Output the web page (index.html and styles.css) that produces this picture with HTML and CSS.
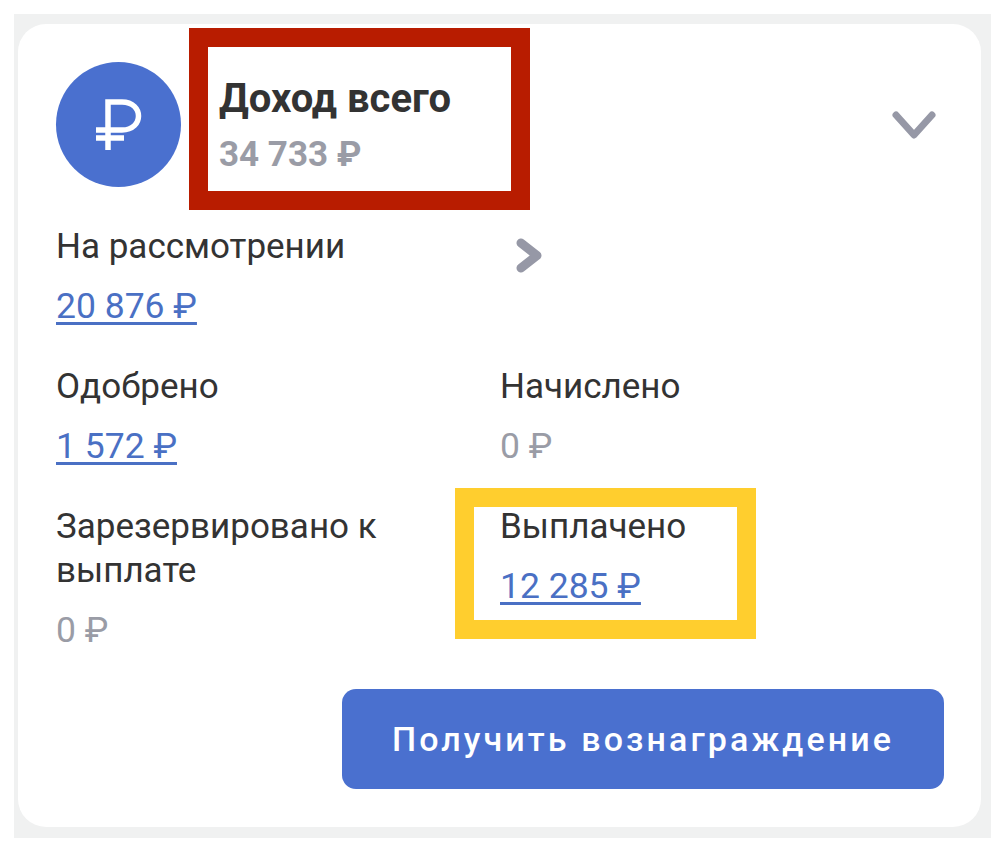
FILE: index.html
```html
<!DOCTYPE html>
<html lang="ru">
<head>
    <meta charset="UTF-8">
    <meta name="viewport" content="width=device-width, initial-scale=1.0">
    <title>Доход</title>
    <link rel="stylesheet" href="styles.css">
</head>
<body>
    <div class="frame">
        <section class="card">
            <header class="card-head">
                <div class="coin">
                    <svg width="125" height="125" viewBox="0 0 125 125" fill="none" stroke="#fff" stroke-width="5.5">
                        <path d="M52 88V40H66C88 40 88 68 66 68H40"/>
                        <path d="M40 76H68"/>
                    </svg>
                </div>
                <div class="total">
                    <h1 class="total-title">Доход всего</h1>
                    <p class="total-sum">34 733 ₽</p>
                </div>
                <svg class="toggle" width="44" height="28" viewBox="0 0 44 28" fill="none" stroke="#9698a6" stroke-width="7" stroke-linecap="round" stroke-linejoin="round">
                    <path d="M4 4L22 24L40 4"/>
                </svg>
            </header>

            <div class="stats">
                <div class="stat">
                    <div class="stat-label">На рассмотрении</div>
                    <a class="stat-value link" href="#">20 876 ₽</a>
                </div>
                <div class="stat">
                    <svg class="stat-arrow" width="26" height="35" viewBox="0 0 26 35" fill="none" stroke="#9698a6" stroke-width="9" stroke-linecap="round" stroke-linejoin="round">
                        <path d="M5 5L21 17.5L5 30"/>
                    </svg>
                </div>
                <div class="stat">
                    <div class="stat-label">Одобрено</div>
                    <a class="stat-value link" href="#">1 572 ₽</a>
                </div>
                <div class="stat">
                    <div class="stat-label">Начислено</div>
                    <div class="stat-value muted">0 ₽</div>
                </div>
                <div class="stat">
                    <div class="stat-label">Зарезервировано к выплате</div>
                    <div class="stat-value muted">0 ₽</div>
                </div>
                <div class="stat">
                    <div class="stat-label">Выплачено</div>
                    <a class="stat-value link" href="#">12 285 ₽</a>
                </div>
            </div>

            <div class="actions">
                <button class="btn-reward" type="button">Получить вознаграждение</button>
            </div>

            <!-- рамки поверх скриншота -->
            <div class="mark mark-red"></div>
            <div class="mark mark-yellow"></div>
        </section>
    </div>
</body>
</html>
```

FILE: styles.css
```css
html, body {
    margin: 0;
    padding: 0;
    background-color: #fff;
}
body {
    font-family: Roboto, "Liberation Sans", sans-serif;
    color: #333;
}
.frame {
    width: 977px;
    height: 824px;
    margin: 14px 0 0 14px;
    padding: 10px 10px 11px 4px;
    box-sizing: border-box;
    background-color: #f0f1f1;
}
.card {
    position: relative;
    height: 803px;
    box-sizing: border-box;
    padding: 38px 37px 38px 38px;
    background-color: #fff;
    border-radius: 28px;
}
.card-head {
    display: flex;
    align-items: center;
    margin-bottom: 38px;
}
.coin {
    width: 125px;
    height: 125px;
    flex: none;
    border-radius: 50%;
    background-color: #4a70cf;
}
.coin svg {
    display: block;
}
.total {
    margin-left: 38px;
    padding-top: 5px;
}
.total-title {
    margin: 0 0 12px;
    font-size: 40px;
    line-height: 44px;
    font-weight: 700;
}
.total-sum {
    margin: 0;
    font-size: 35px;
    line-height: 44px;
    font-weight: 700;
    color: #9a9ca6;
}
.toggle {
    margin-left: auto;
    margin-right: 8px;
}
.stats {
    display: grid;
    grid-template-columns: 444px 1fr;
    row-gap: 37px;
}
.stat-label {
    font-size: 35px;
    line-height: 44px;
    margin-bottom: 15px;
    max-width: 340px;
}
.stat-value {
    display: block;
    width: fit-content;
    font-size: 35.5px;
    line-height: 44px;
}
.stat-arrow {
    display: block;
    margin: 13px 0 0 16px;
}
.link {
    color: #4a70c4;
    text-decoration: underline;
    text-decoration-thickness: 3px;
    text-underline-offset: 4px;
}
.muted {
    color: #9a9ca6;
}
.actions {
    display: flex;
    justify-content: flex-end;
    margin-top: 37px;
}
.btn-reward {
    width: 602px;
    height: 100px;
    border: none;
    border-radius: 14px;
    background-color: #4a70cf;
    color: #fff;
    font-family: inherit;
    font-size: 34px;
    font-weight: 500;
    letter-spacing: 3.1px;
}
.mark {
    position: absolute;
    box-sizing: border-box;
    border-style: solid;
    border-width: 19px;
}
.mark-red {
    left: 171px;
    top: 4px;
    width: 341px;
    height: 182px;
    border-color: #b81c00;
}
.mark-yellow {
    left: 437px;
    top: 464px;
    width: 301px;
    height: 151px;
    border-color: #ffce2e;
}
```
